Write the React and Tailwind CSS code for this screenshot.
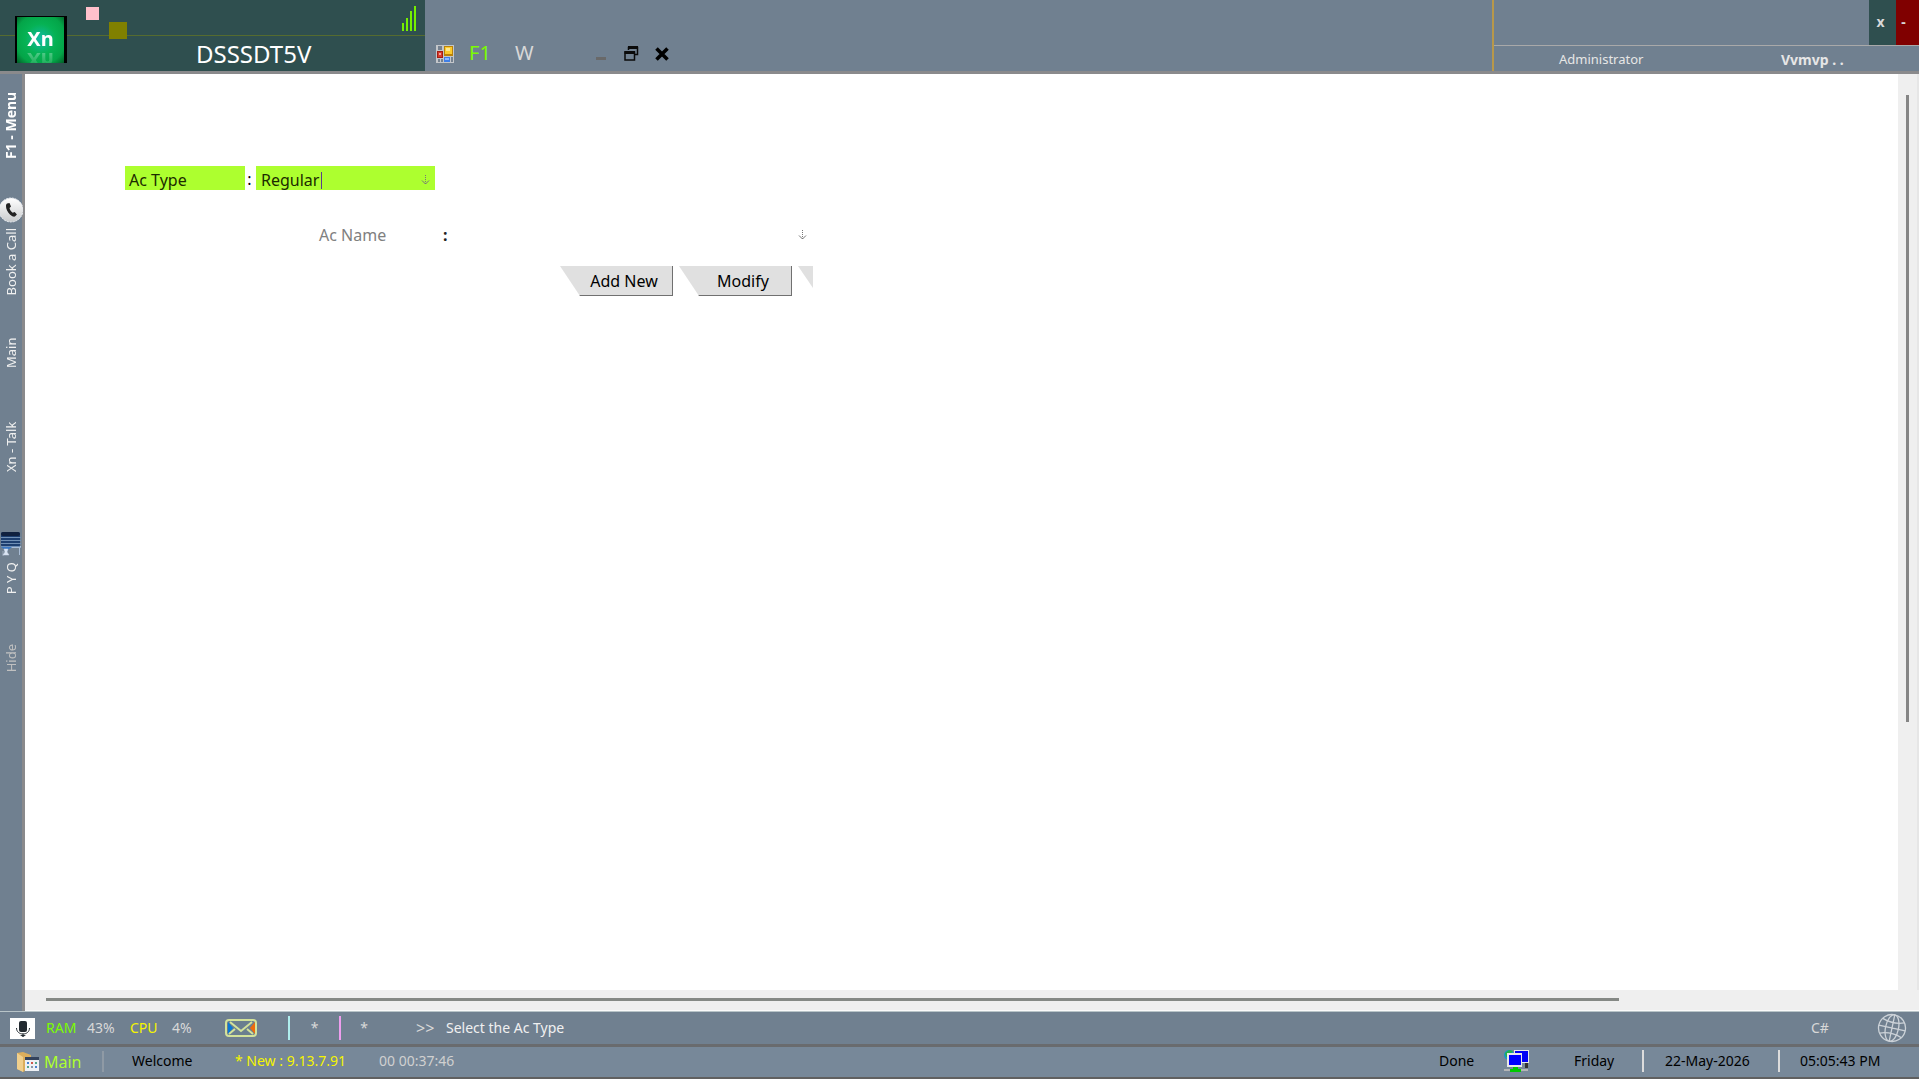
import React from "react";

const UI = "font-['Noto_Sans',sans-serif]";

function Logo() {
  return (
    <div className="h-[47px] w-[52px] overflow-hidden border-l-2 border-r-[3px] border-t border-black bg-[radial-gradient(circle_at_50%_48%,#12bba6_0%,#06b254_45%,#04a548_75%,#035c28_100%)] pt-3 text-center text-xl leading-5 font-bold text-white">
      <span className="block [-webkit-box-reflect:below_1px_linear-gradient(transparent,rgba(255,255,255,0.35))]">Xn</span>
    </div>
  );
}

function SignalIcon() {
  return (
    <svg width="14" height="26" viewBox="0 0 14 26" fill="#76ee00" aria-hidden="true">
      <rect x="0" y="17" width="2" height="8" />
      <rect x="4" y="12" width="2" height="13" />
      <rect x="8" y="5" width="2" height="20" />
      <rect x="12" y="0" width="2" height="25" />
    </svg>
  );
}

function FormIcon() {
  return (
    <svg width="18" height="18" viewBox="0 0 18 18" aria-hidden="true" className="block">
      <rect width="18" height="18" fill="#c3c6ca" />
      <rect x="2" y="1" width="4" height="4" fill="#75818f" />
      <rect x="1" y="6" width="6" height="7" fill="#a41c12" />
      <rect x="2" y="7" width="4" height="5" fill="#d73a2c" />
      <rect x="3" y="8" width="2" height="2" fill="#f2a39a" />
      <rect x="8" y="1" width="9" height="10" fill="#b9820a" />
      <rect x="9" y="2" width="7" height="7" fill="#fbcb2e" />
      <rect x="10" y="3" width="4" height="3" fill="#ffe78c" />
      <rect x="8" y="12" width="6" height="5" fill="#3f7fe6" />
      <rect x="9" y="13" width="4" height="2" fill="#8db9ff" />
      <rect x="2" y="14" width="2" height="3" fill="#75818f" />
      <rect x="5" y="14" width="2" height="3" fill="#75818f" />
      <rect x="15" y="12" width="2" height="5" fill="#75818f" />
    </svg>
  );
}

function RestoreIcon() {
  return (
    <svg width="15" height="15" viewBox="0 0 15 15" fill="none" stroke="#0a0a0a" aria-hidden="true">
      <path d="M4.500 4V1.500h9v7H11" strokeWidth="1.500" />
      <path d="M4 1.500h10" strokeWidth="3" />
      <rect x="1" y="6" width="9.500" height="8" strokeWidth="1.500" />
      <path d="M0.500 6.500h10.500" strokeWidth="3" />
    </svg>
  );
}

function CloseIcon() {
  return (
    <svg width="14" height="14" viewBox="0 0 14 14" fill="none" stroke="#000" strokeWidth="3.600" aria-hidden="true">
      <path d="M1.500 1.500l11 11M12.500 1.500l-11 11" />
    </svg>
  );
}

function PhoneIcon() {
  return (
    <svg width="23" height="26" viewBox="0 0 23 26" className="block" aria-hidden="true">
      <defs>
        <linearGradient id="phoneDisc" x1="0" y1="0" x2="0" y2="1">
          <stop offset="0" stopColor="#fff" />
          <stop offset="1" stopColor="#c9cbcd" />
        </linearGradient>
      </defs>
      <circle cx="11" cy="13" r="12" fill="url(#phoneDisc)" stroke="#e8ecf2" strokeDasharray="2 1" />
      <path d="M7 6.500l2.500-.5 1.500 3.500-1.500 1.500c.5 2 1.500 3.500 3.200 4.700l2-.7 2.200 2.600-1.700 1.700c-1 .8-3 .2-5-1.600-2.600-2.300-4.300-5.800-4.200-8.700 0-1 .3-2 1-2.500z" fill="#222" />
    </svg>
  );
}

function StackIcon() {
  return (
    <svg width="22" height="24" viewBox="0 0 22 24" className="block" aria-hidden="true">
      <rect x="1" y="0" width="19" height="15" rx="2" fill="#1d3f70" />
      <rect x="1" y="0" width="19" height="4" rx="2" fill="#10213f" />
      <path d="M1 5.500h20M1 8.500h20M1 11.500h20M1 14.500h20" stroke="#6f8fb5" />
      <path d="M1 15h12l-4 2-3 3-2-3z" fill="#3a78c4" />
      <path d="M20.500 14v1.500h-9M19.500 16v7" stroke="#a9bdd6" fill="none" />
      <path d="M4 17h4l-1 3 2 3H3l2-3zM3 19v5" fill="#dbe5f2" stroke="#c9d7ea" strokeWidth="0.500" />
    </svg>
  );
}

function MicIcon() {
  return (
    <svg width="25" height="21" viewBox="0 0 25 21" className="block" aria-hidden="true">
      <rect width="25" height="21" fill="#fff" />
      <rect x="9" y="3" width="8" height="11" rx="2" fill="#222a30" />
      <path d="M6.500 10c0 8 13 8 13 0M13 15.500v3" stroke="#222a30" fill="none" />
      <path d="M10 17h6l-3 2z" fill="#222a30" />
    </svg>
  );
}

function MailIcon() {
  return (
    <svg width="32" height="18" viewBox="0 0 32 18" className="block" aria-hidden="true">
      <rect x="1" y="1" width="30" height="16" rx="3" fill="#6b7f8f" stroke="#d3e29a" strokeWidth="2" />
      <path d="M3 3l5 6-5 6z" fill="#0878d4" />
      <path d="M30 3l-5 6 5 6z" fill="#ee6b0c" />
      <path d="M5 3l11 9L27 3M4 15l6-5M28 15l-6-5" fill="none" stroke="#d3e29a" strokeWidth="2" />
    </svg>
  );
}

function FolderIcon() {
  return (
    <svg width="24" height="21" viewBox="0 0 24 21" className="block" aria-hidden="true">
      <path d="M1 1l6-1 8 3v3l-7 14-7-3z" fill="#dcae5c" />
      <path d="M1 1l6 4v15l-6-3z" fill="#f0cf8c" />
      <rect x="9" y="5" width="14" height="14" fill="#eef1f5" />
      <rect x="9" y="5" width="14" height="3" fill="#33425c" />
      <path d="M11 10h2v2h-2zM19 14h2v2h-2z" fill="#4a82cf" />
      <path d="M15 10h2v2h-2z" fill="#d0574a" />
      <path d="M19 10h2v2h-2zM11 14h2v2h-2z" fill="#55a58c" />
      <path d="M15 14h2v2h-2z" fill="#8896a8" />
    </svg>
  );
}

function NetworkIcon() {
  return (
    <svg width="25" height="23" viewBox="0 0 25 23" className="block" aria-hidden="true">
      <circle cx="5" cy="5" r="5" fill="#1598c8" />
      <path d="M1 3l4-3 4 1-4 5-3 1z" fill="#22b04c" />
      <rect x="10" y="0" width="15" height="13" fill="#e8e8e8" />
      <rect x="11" y="1" width="13" height="11" fill="#0000f5" />
      <path d="M21 13h3v5h-3z" fill="#333" />
      <rect x="3" y="3" width="15" height="14" fill="#e8e8e8" />
      <rect x="5" y="5" width="12" height="10" fill="#0000ff" />
      <path d="M0 20h24" stroke="#b5b5b5" strokeWidth="2" />
      <path d="M9 17h5v2h3v3H6v-3h3z" fill="#00c800" />
    </svg>
  );
}

function GlobeIcon() {
  return (
    <svg width="30" height="30" viewBox="0 0 30 30" className="block" fill="none" stroke="#ccd2d8" strokeWidth="1.300" aria-hidden="true">
      <g transform="rotate(12 15 15)">
        <circle cx="15" cy="15" r="13.500" />
        <ellipse cx="15" cy="15" rx="6.500" ry="13.500" />
        <path d="M15 1.500v27M1.500 15h27M4 7.500q11 4 22 0M4 22.500q11-4 22 0" />
      </g>
    </svg>
  );
}

function DownArrow() {
  return (
    <svg width="9" height="11" viewBox="0 0 9 11" className="block" fill="none" stroke="#777" aria-hidden="true">
      <path d="M4.500 0v9" strokeDasharray="1 1" />
      <path d="M1 5.500l3.500 3.500L8 5.500" />
    </svg>
  );
}

function Header() {
  return (
    <header className="flex h-[74px] shrink-0 border-b-[3px] border-[#8a8a8c] bg-[#708090]">
      <div className="relative flex w-[425px] shrink-0 flex-col bg-[#2f4f4f]">
        <div className="flex h-9 shrink-0 justify-end border-b border-[#556b2f] pr-[9px] pt-[6px]">
          <SignalIcon />
        </div>
        <h1 className="flex flex-1 items-center pl-[196px] text-2xl text-white">DSSSDT5V</h1>
        <div className="absolute left-[15px] top-4">
          <Logo />
        </div>
        <span className="absolute left-[86px] top-[7px] size-[13px] bg-[#ffc0cb]" />
        <span className="absolute left-[109px] top-[22px] h-[17px] w-[18px] bg-[#808000]" />
      </div>
      <nav className="flex flex-1 items-end pb-2 pl-[11px]">
        <button className="w-[33px]" aria-label="Forms"><FormIcon /></button>
        <button className="w-[46px] text-left text-xl leading-5 text-[#7cfc00]">F1</button>
        <button className="w-[81px] text-left text-xl leading-5 text-[#d8d8d8]">W</button>
        <button className="mb-[3px] h-[3px] w-[10px] bg-[#696969]" aria-label="Minimize" />
        <button className="mb-[2px] ml-[18px]" aria-label="Restore"><RestoreIcon /></button>
        <button className="mb-[2px] ml-4" aria-label="Close"><CloseIcon /></button>
      </nav>
      <div className="flex w-[427px] shrink-0 flex-col border-l-2 border-[#b8984a]">
        <div className="flex h-[45px] justify-end text-sm font-bold text-[#d8d8d8]">
          <button className="w-[27px] bg-[#2f4f4f] pb-[2px] pr-1">x</button>
          <button className="w-[23px] bg-[#800000] pb-[2px] pr-2">-</button>
        </div>
        <div className="flex flex-1 items-center border-t border-[#a9a9a9] pt-[2px] text-[13px] text-[#e6e6e6]">
          <span className="flex-1 pl-[65px]">Administrator</span>
          <span className="w-[138px] text-sm font-bold">Vvmvp . .</span>
        </div>
      </div>
    </header>
  );
}

const sideText = "rotate-180 [writing-mode:vertical-rl] text-[13px] leading-[22px] text-[#f0f0f0] text-right";

function Sidebar() {
  return (
    <nav className="flex w-[25px] shrink-0 flex-col items-start border-r-[3px] border-[#8a8a8c] bg-[#708090] pt-[18px]">
      <button className="h-[105px] rotate-180 text-right text-sm leading-[22px] font-bold text-white [writing-mode:vertical-rl]">F1 - Menu</button>
      <button className="h-[141px]">
        <span className="flex h-full flex-col gap-[5px]">
          <PhoneIcon />
          <span className={sideText}>Book a Call</span>
        </span>
      </button>
      <button className={"h-[84px] " + sideText}>Main</button>
      <button className={"h-[110px] " + sideText}>Xn - Talk</button>
      <button className="h-[112px]">
        <span className="flex h-full flex-col gap-[6px]">
          <StackIcon />
          <span className={sideText}>P Y Q</span>
        </span>
      </button>
      <button className="rotate-180 text-[13px] leading-[22px] text-[#c0c0c0] [writing-mode:vertical-rl]">Hide</button>
    </nav>
  );
}

function SlantButton({ children }) {
  return (
    <button className="flex h-[30px] w-[113px] items-center justify-center border-b border-r border-[#707070] bg-[#e0e0e0] pl-4 text-base text-black [clip-path:polygon(0_0,100%_0,100%_100%,20px_100%)]">
      {children}
    </button>
  );
}

function Form() {
  return (
    <form className="flex-1 bg-white pl-[100px] pt-[92px] text-base leading-6" onSubmit={(e) => e.preventDefault()}>
      <div className="flex h-6 items-center">
        <label htmlFor="acType" className="h-6 w-[120px] bg-[#adff2f] pl-1 leading-7 text-[#1c2b00]">Ac Type</label>
        <span className="w-[11px] pt-[2px] pr-[2px] text-center text-black">:</span>
        <div className="flex h-6 w-[179px] items-center bg-[#adff2f] pr-[5px]">
          <div className="grid flex-1 items-center">
            <input id="acType" defaultValue="Regular" className="col-start-1 row-start-1 h-6 w-full bg-transparent pl-[5px] pt-1 text-[#1c2b00] outline-none" />
            <span className="pointer-events-none col-start-1 row-start-1 ml-[65px] mt-1 h-[17px] w-px bg-[#5a3d8c]" />
          </div>
          <div className="pt-1"><DownArrow /></div>
        </div>
      </div>
      <div className="mt-[33px] flex h-6 items-center pl-[194px]">
        <label htmlFor="acName" className="w-[124px] text-[#808080]">Ac Name</label>
        <span className="w-3 font-bold text-[#222]">:</span>
        <input id="acName" className="h-6 w-[343px] bg-transparent outline-none" />
        <DownArrow />
      </div>
      <div className="mt-[19px] flex gap-[6px] pl-[435px]">
        <SlantButton>Add New</SlantButton>
        <SlantButton>Modify</SlantButton>
        <button aria-label="More" className="h-[22px] w-[15px] bg-[#e0e0e0] [clip-path:polygon(0_0,100%_0,100%_100%)]" />
      </div>
    </form>
  );
}

function Workspace() {
  return (
    <main className="flex min-w-0 flex-1 flex-col bg-[#efefef]">
      <div className="flex flex-1">
        <Form />
        <div className="flex w-[21px] shrink-0 flex-col border-r-2 border-[#e6e6e6] bg-[#efefef] pl-2 pt-[21px]">
          <div className="h-[70%] w-[3px] bg-[#858585]" />
        </div>
      </div>
      <div className="flex h-[21px] shrink-0 items-start border-b border-[#fafafa] pl-[21px] pt-2">
        <div className="h-[3px] w-[84%] bg-[#858985]" />
      </div>
    </main>
  );
}

function StatusBars() {
  return (
    <footer className="shrink-0 text-sm">
      <div className="flex h-9 items-center border-b-[3px] border-t border-t-[#b8c4c8] border-b-[#696b6e] bg-[#708090] text-[#d8d8d8]">
        <button className="ml-[10px] w-9" aria-label="Microphone"><MicIcon /></button>
        <span className="w-[41px] text-[#7cfc00]">RAM</span>
        <span className="w-[43px]">43%</span>
        <span className="w-[42px] text-[#f5f500]">CPU</span>
        <span className="w-[53px]">4%</span>
        <button aria-label="Mail"><MailIcon /></button>
        <span className="ml-[31px] h-6 w-0.5 bg-[#afeeee]" />
        <span className="w-[49px] text-center">*</span>
        <span className="h-6 w-0.5 bg-[#ee9eee]" />
        <span className="w-[46px] text-center">*</span>
        <span className="ml-[29px] w-[30px] text-base">&gt;&gt;</span>
        <span className="text-[#f0f0f0]">Select the Ac Type</span>
        <span className="ml-auto w-[66px]">C#</span>
        <button className="mr-[12px]" aria-label="Web"><GlobeIcon /></button>
      </div>
      <div className="flex h-8 items-center border-b-2 border-[#606060] bg-[#778899] pb-[2px] text-black">
        <button className="ml-4 flex w-[86px] items-center gap-1 pt-[2px] text-base text-[#adff2f]">
          <FolderIcon />
          <span>Main</span>
        </button>
        <span className="h-[21px] w-0.5 bg-[#8f9aa5]" />
        <span className="ml-7 w-[103px]">Welcome</span>
        <span className="w-36 text-[#f5f500]">* New : 9.13.7.91</span>
        <span className="text-[#d0d0d0]">00 00:37:46</span>
        <span className="ml-auto w-[65px]">Done</span>
        <button className="w-[70px]" aria-label="Network"><NetworkIcon /></button>
        <span className="w-[68px]">Friday</span>
        <span className="h-[22px] w-0.5 bg-[#dcdcdc]" />
        <span className="ml-[21px] w-[113px]">22-May-2026</span>
        <span className="h-[22px] w-0.5 bg-[#dcdcdc]" />
        <span className="ml-5 w-[119px]">05:05:43 PM</span>
      </div>
    </footer>
  );
}

export default function App() {
  return (
    <div className={"flex h-screen flex-col overflow-hidden bg-[#708090] " + UI}>
      <Header />
      <div className="flex min-h-0 flex-1">
        <Sidebar />
        <Workspace />
      </div>
      <StatusBars />
    </div>
  );
}
